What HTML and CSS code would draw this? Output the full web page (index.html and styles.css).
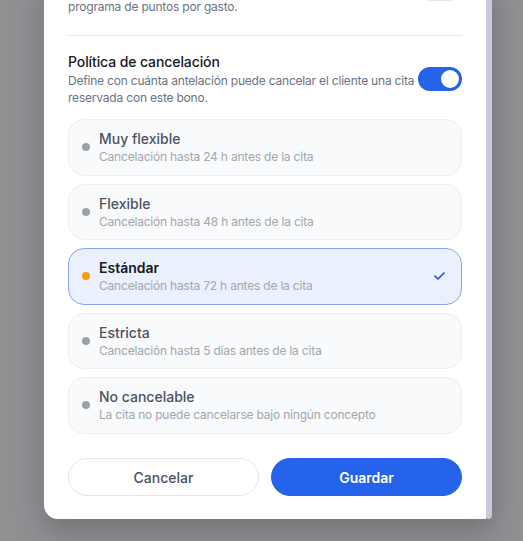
FILE: index.html
```html
<!DOCTYPE html>
<html lang="es">
<head>
<meta charset="utf-8">
<title>Bono</title>
<link rel="stylesheet" href="styles.css">
</head>
<body>
<div class="overlay">
  <div class="modal">
    <div class="modal-body">
      <section class="setting setting-top">
        <div class="setting-text">
          <p class="setting-desc">programa de puntos por gasto.</p>
        </div>
        <span class="toggle toggle-peek"><span class="knob"></span></span>
      </section>

      <section class="setting-block">
        <div class="setting">
          <div class="setting-text">
            <h3 class="setting-title">Política de cancelación</h3>
            <p class="setting-desc">Define con cuánta antelación puede cancelar el cliente una cita reservada con este bono.</p>
          </div>
          <span class="toggle on"><span class="knob"></span></span>
        </div>

        <div class="options">
          <div class="option">
            <span class="dot"></span>
            <div class="option-text">
              <div class="option-title">Muy flexible</div>
              <div class="option-desc">Cancelación hasta 24 h antes de la cita</div>
            </div>
          </div>
          <div class="option">
            <span class="dot"></span>
            <div class="option-text">
              <div class="option-title">Flexible</div>
              <div class="option-desc">Cancelación hasta 48 h antes de la cita</div>
            </div>
          </div>
          <div class="option selected">
            <span class="dot"></span>
            <div class="option-text">
              <div class="option-title">Estándar</div>
              <div class="option-desc">Cancelación hasta 72 h antes de la cita</div>
            </div>
            <svg class="check" width="11" height="8" viewBox="0 0 11 8" aria-hidden="true"><path d="M1 4.2 L4 7 L10 1" fill="none" stroke="#2858d6" stroke-width="1.7" stroke-linecap="round" stroke-linejoin="round"/></svg>
          </div>
          <div class="option">
            <span class="dot"></span>
            <div class="option-text">
              <div class="option-title">Estricta</div>
              <div class="option-desc">Cancelación hasta 5 días antes de la cita</div>
            </div>
          </div>
          <div class="option">
            <span class="dot"></span>
            <div class="option-text">
              <div class="option-title">No cancelable</div>
              <div class="option-desc">La cita no puede cancelarse bajo ningún concepto</div>
            </div>
          </div>
        </div>
      </section>

      <div class="actions">
        <button class="btn btn-secondary">Cancelar</button>
        <button class="btn btn-primary">Guardar</button>
      </div>
    </div>
    <div class="scrollbar"></div>
  </div>
</div>
</body>
</html>
```

FILE: styles.css
```css
* { box-sizing: border-box; }

html, body {
  margin: 0;
  padding: 0;
  height: 100%;
}

body {
  background: #8f9092;
  font-family: Inter, "Noto Sans", sans-serif;
  overflow: hidden;
}

.overlay {
  padding-left: 44px;
}

.modal {
  width: 448px;
  margin-top: -26px;
  display: flex;
  border-radius: 0 0 4px 14px;
  overflow: hidden;
  box-shadow: 0 12px 28px rgba(40, 40, 50, 0.28);
}

.modal-body {
  flex: 1;
  background: #ffffff;
  padding: 24px 24px 23px;
}

.scrollbar {
  width: 6px;
  background: #c9c9dc;
  border-radius: 0 0 3px 3px;
}

.setting {
  display: flex;
  align-items: center;
  gap: 2px;
}

.setting-top {
  align-items: flex-start;
  padding-bottom: 20px;
  border-bottom: 1px solid #e7e8ec;
}

.toggle-peek {
  margin-top: -21px;
}

.setting-block {
  padding-top: 16px;
}

.setting-text {
  flex: 1;
  min-width: 0;
}

.setting-title {
  margin: 0;
  font-size: 14px;
  line-height: 20px;
  font-weight: 500;
  letter-spacing: -0.1px;
  color: #16181d;
}

.setting-desc {
  margin: 0;
  font-size: 12px;
  line-height: 17px;
  letter-spacing: -0.2px;
  color: #6b7280;
}

.toggle {
  flex: none;
  width: 44px;
  height: 24px;
  border-radius: 12px;
  background: #e5e7eb;
  display: flex;
  align-items: center;
  padding: 3px;
}

.toggle .knob {
  width: 18px;
  height: 18px;
  border-radius: 50%;
  background: #ffffff;
}

.toggle.on {
  background: #2563eb;
  justify-content: flex-end;
}

.options {
  margin-top: 13px;
  display: flex;
  flex-direction: column;
  gap: 8px;
}

.option {
  display: flex;
  align-items: center;
  gap: 9px;
  padding: 9px 16px 9px 13px;
  border: 1px solid #eceef2;
  border-radius: 16px;
  background: #f9fafb;
}

.dot {
  flex: none;
  width: 8px;
  height: 8px;
  border-radius: 50%;
  background: #9ca0aa;
}

.option-text {
  flex: 1;
}

.option-title {
  font-size: 14px;
  line-height: 20px;
  font-weight: 500;
  color: #4b5262;
}

.option-desc {
  font-size: 12px;
  line-height: 16.5px;
  letter-spacing: -0.2px;
  color: #a3a7b0;
}

.option.selected {
  background: #eaf0fd;
  border-color: #88a5e8;
}

.option.selected .dot {
  background: #f59e0b;
}

.option.selected .option-title {
  color: #16181d;
  font-weight: 600;
}

.check {
  flex: none;
}

.actions {
  margin-top: 24.5px;
  display: grid;
  grid-template-columns: 1fr 1fr;
  gap: 12px;
}

.btn {
  height: 38px;
  border-radius: 19px;
  font-family: inherit;
  font-size: 14px;
  font-weight: 500;
  cursor: pointer;
}

.btn-secondary {
  background: #ffffff;
  border: 1px solid #e5e7eb;
  color: #4b5262;
}

.btn-primary {
  background: #2563eb;
  border: 1px solid #2563eb;
  color: #ffffff;
  font-weight: 600;
}
```
